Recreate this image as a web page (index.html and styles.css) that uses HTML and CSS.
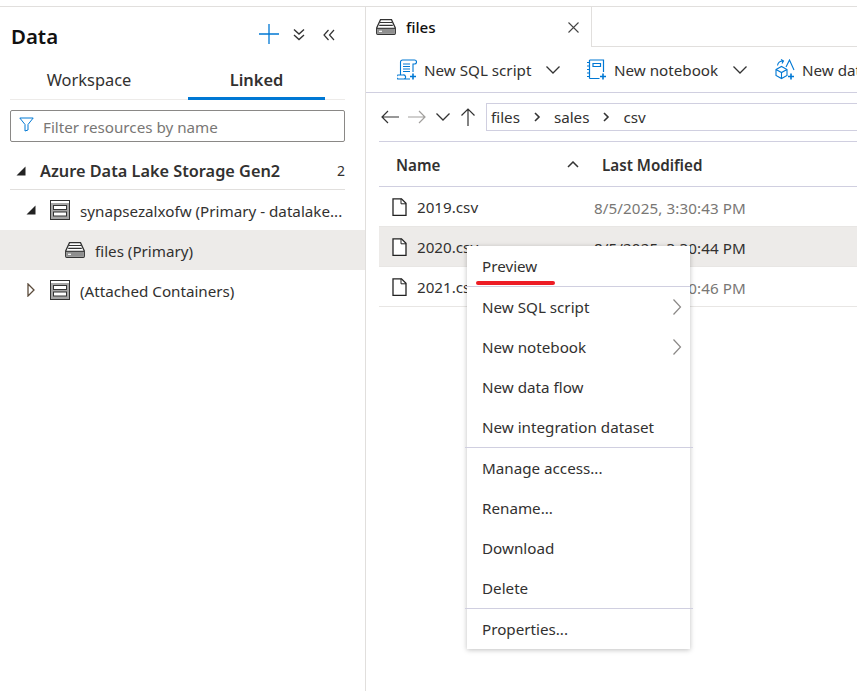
FILE: index.html
```html
<!DOCTYPE html>
<html>
<head>
<meta charset="utf-8"/>
<title>Data - files</title>
<link rel="stylesheet" href="styles.css">
</head>
<body>
<svg class="defs" width="0" height="0">
  <symbol id="drive" viewBox="0 0 20 16">
    <path d="M4.5 .7h11L19.3 9v5.3a1 1 0 0 1-1 1H1.700a1 1 0 0 1-1-1V9z" fill="#fff" stroke="#333" stroke-width="1.300"/>
    <path d="M1 9.300h18M4 3.500h12M3.200 6.300h13.600" fill="none" stroke="#333" stroke-width="1.200"/>
    <path d="M1.200 9.800h17.600v5H1.200z" fill="#8f8f8f"/>
    <path d="M3 12.300h3" stroke="#fff" stroke-width="1.200"/>
  </symbol>
  <symbol id="storage" viewBox="0 0 20 20">
    <rect x=".5" y=".5" width="19" height="19" fill="#a6a6a6" stroke="#333"/>
    <rect x="1" y="1" width="18" height="2" fill="#fff"/>
    <rect x="3.500" y="5.500" width="13" height="4" fill="#fff" stroke="#333"/>
    <rect x="3.500" y="12" width="13" height="4" fill="#fff" stroke="#333"/>
  </symbol>
  <symbol id="file" viewBox="0 0 15 18">
    <path d="M1 .8h8.500L14 5.300v12H1z" fill="#fff" stroke="#222" stroke-width="1.300"/>
    <path d="M9 .8v5h5" fill="none" stroke="#222"/>
  </symbol>
  <symbol id="chevron" viewBox="0 0 16 10">
    <path d="M1.500 1.500L8 8l6.500-6.500" fill="none" stroke="#333" stroke-width="1.300"/>
  </symbol>
  <symbol id="crumb" viewBox="0 0 8 12">
    <path d="M2 2l4 4-4 4" fill="none" stroke="#333" stroke-width="1.600"/>
  </symbol>
  <symbol id="submenu" viewBox="0 0 10 18">
    <path d="M1.500 1.500L8.500 9l-7 7.500" fill="none" stroke="#8a8886" stroke-width="1.200"/>
  </symbol>
</svg>

<div class="app">
  <aside class="side">
    <div class="side-head">
      <h1>Data</h1>
      <svg class="ico-plus" width="20" height="20" viewBox="0 0 20 20"><path d="M0 10h20M10 0v20" stroke="#0078d4" stroke-width="1.300"/></svg>
      <svg class="ico-down" width="12" height="13" viewBox="0 0 12 13"><path d="M1 1.500l5 4.500 5-4.500M1 7l5 4.500L11 7" fill="none" stroke="#333" stroke-width="1.400"/></svg>
      <svg class="ico-left" width="12" height="12" viewBox="0 0 12 12"><path d="M5.500 1L1 6l4.500 5M11 1L6.500 6l4.500 5" fill="none" stroke="#333" stroke-width="1.200"/></svg>
    </div>
    <div class="tabs">
      <div class="tab-item">Workspace</div>
      <div class="tab-item active">Linked</div>
    </div>
    <div class="filter">
      <svg width="15" height="15" viewBox="0 0 15 15"><path d="M.8 1h13.400L9 7.500v5.500l-3 1V7.500z" fill="none" stroke="#0078d4"/></svg>
      <span>Filter resources by name</span>
    </div>
    <div class="group">
      <svg width="10" height="10" viewBox="0 0 10 10"><path d="M9.500 .5v9H.5z" fill="#222"/></svg>
      <span class="group-name">Azure Data Lake Storage Gen2</span>
      <span class="group-count">2</span>
    </div>
    <div class="tree-row lvl1">
      <svg class="twist" width="10" height="10" viewBox="0 0 10 10"><path d="M9.500 .5v9H.5z" fill="#222"/></svg>
      <svg class="node" width="20" height="20"><use href="#storage"/></svg>
      <span>synapsezalxofw (Primary - datalake...</span>
    </div>
    <div class="tree-row lvl2 selected">
      <svg class="node" width="20" height="16"><use href="#drive"/></svg>
      <span>files (Primary)</span>
    </div>
    <div class="tree-row lvl1">
      <svg class="twist" width="10" height="14" viewBox="0 0 10 14"><path d="M2 1l6 6-6 6z" fill="#fff" stroke="#5a4a3a" stroke-width="1.300"/></svg>
      <svg class="node" width="20" height="20"><use href="#storage"/></svg>
      <span>(Attached Containers)</span>
    </div>
  </aside>

  <main class="main">
    <div class="tabbar">
      <div class="doc-tab">
        <svg width="20" height="16"><use href="#drive"/></svg>
        <span class="doc-name">files</span>
        <svg class="doc-close" width="11" height="11" viewBox="0 0 11 11"><path d="M.5 .5l10 10M10.500 .5l-10 10" stroke="#444" stroke-width="1.100"/></svg>
      </div>
    </div>

    <div class="toolbar">
      <div class="tool tool-sql">
        <svg width="20" height="21" viewBox="0 0 20 21" fill="none" stroke="#0078d4" stroke-width="1.100">
          <path d="M3.500 16V3a2 2 0 0 1 2-2h12a2 2 0 0 1 0 4h-1.500V13M3.500 16H1.500a2 2 0 0 0 0 4H13M6 16H3.500M6 16a2 2 0 0 1 1 4"/>
          <path d="M6 5h7M6 7.500h7M6 10h7M6 12.500h7"/>
          <path d="M16 14.500v6M13 17.500h6" stroke-width="1.600"/>
        </svg>
        <span>New SQL script</span>
        <svg class="caret" width="16" height="10"><use href="#chevron"/></svg>
      </div>
      <div class="tool tool-nb">
        <svg width="20" height="21" viewBox="0 0 20 21" fill="none" stroke="#0078d4" stroke-width="1.200">
          <path d="M2.500 1h14v12M2.500 19.500h10M2.500 1v18.500"/>
          <path d="M6 4.500h7.500v3H6z"/>
          <path d="M0 3.500h3M0 7h3M0 10.500h3M0 14h3M0 17.500h3"/>
          <path d="M16 14.500v6M13 17.500h6" stroke-width="1.600"/>
        </svg>
        <span>New notebook</span>
        <svg class="caret" width="16" height="10"><use href="#chevron"/></svg>
      </div>
      <div class="tool tool-flow">
        <svg width="20" height="21" viewBox="0 0 20 21" fill="none" stroke="#0078d4" stroke-width="1.100">
          <path d="M1 10.500l5.500-3 5.500 3v6l-5.500 3-5.500-3zM1 10.500l5.500 3 5.500-3M6.500 13.500v6"/>
          <path d="M2.500 6.500C3 3.500 5 2 8 2M6 .5L8.500 2 7 4.500"/>
          <path d="M11 8L14.500 1 19 11"/>
          <path d="M16 14.500v6M13 17.500h6" stroke-width="1.600"/>
        </svg>
        <span>New data flow</span>
      </div>
    </div>

    <div class="pathbar">
      <div class="nav">
        <svg width="18" height="14" viewBox="0 0 18 14"><path d="M18 7H1M7 1L1 7l6 6" fill="none" stroke="#333" stroke-width="1.200"/></svg>
        <svg width="18" height="14" viewBox="0 0 18 14"><path d="M0 7h17M11 1l6 6-6 6" fill="none" stroke="#a19f9d" stroke-width="1.200"/></svg>
        <svg width="16" height="10"><use href="#chevron"/></svg>
        <svg width="16" height="18" viewBox="0 0 16 18"><path d="M8 18V1M1.500 7.500L8 1l6.500 6.500" fill="none" stroke="#333" stroke-width="1.200"/></svg>
      </div>
      <div class="crumbs">
        <span class="crumb-files">files</span>
        <svg width="8" height="12"><use href="#crumb"/></svg>
        <span>sales</span>
        <svg width="8" height="12"><use href="#crumb"/></svg>
        <span>csv</span>
      </div>
    </div>

    <div class="table">
      <div class="thead">
        <div class="col-name"><span>Name</span>
          <svg width="12" height="7" viewBox="0 0 12 7"><path d="M1 6l5-5 5 5" fill="none" stroke="#333" stroke-width="1.500"/></svg>
        </div>
        <div class="col-date">Last Modified</div>
      </div>
      <div class="trow">
        <div class="cell-name"><svg width="15" height="18"><use href="#file"/></svg>2019.csv</div>
        <div class="cell-date">8/5/2025, 3:30:43 PM</div>
      </div>
      <div class="trow hover">
        <div class="cell-name"><svg width="15" height="18"><use href="#file"/></svg>2020.csv</div>
        <div class="cell-date">8/5/2025, 3:30:44 PM</div>
      </div>
      <div class="trow">
        <div class="cell-name"><svg width="15" height="18"><use href="#file"/></svg>2021.csv</div>
        <div class="cell-date">8/5/2025, 3:30:46 PM</div>
      </div>
    </div>
  </main>

  <div class="menu">
    <div class="menu-item">Preview<div class="red-mark"></div></div>
    <div class="menu-sep first"></div>
    <div class="menu-item">New SQL script<svg width="10" height="18"><use href="#submenu"/></svg></div>
    <div class="menu-item">New notebook<svg width="10" height="18"><use href="#submenu"/></svg></div>
    <div class="menu-item">New data flow</div>
    <div class="menu-item">New integration dataset</div>
    <div class="menu-sep"></div>
    <div class="menu-item">Manage access...</div>
    <div class="menu-item">Rename...</div>
    <div class="menu-item">Download</div>
    <div class="menu-item">Delete</div>
    <div class="menu-sep"></div>
    <div class="menu-item">Properties...</div>
  </div>
</div>
</body>
</html>
```

FILE: styles.css
```css
body {
  margin: 0;
  background: #fff;
  color: #323130;
  font-family: "Noto Sans", "Open Sans", sans-serif;
  font-size: 15.2px;
}

svg {
  display: block;
  flex: none;
}

.defs {
  position: absolute;
}

.app {
  position: relative;
  display: flex;
  width: 857px;
  height: 691px;
  overflow: hidden;
}

/* left panel */
.side {
  box-sizing: border-box;
  width: 366px;
  margin-top: 6px;
  border-top: 1px solid #e1dfdd;
  border-right: 1px solid #e1dfdd;
}

.side-head {
  display: flex;
  align-items: center;
  height: 43px;
  padding: 14px 0 0 11px;
  box-sizing: border-box;
}

.side-head h1 {
  margin: 0;
  flex: 1;
  font-size: 20.4px;
  font-weight: 600;
  color: #111;
}

.ico-plus {
  margin-right: 14px;
  margin-top: -4px;
}

.ico-down {
  margin-right: 18px;
  margin-top: -2px;
}

.ico-left {
  margin-right: 30px;
  margin-top: -2px;
}

.tabs {
  display: flex;
  height: 50px;
  margin: 0 20px 0 10px;
  box-sizing: border-box;
  border-bottom: 1px solid #edebe9;
}

.tab-item {
  width: 158px;
  margin-right: 20px;
  padding-top: 17px;
  text-align: center;
  font-size: 16.400px;
  line-height: 26px;
}

.tab-item.active {
  width: 137px;
  margin: 0 0 -1px 0;
  font-weight: 600;
  border-bottom: 3px solid #0078d4;
}

.filter {
  display: flex;
  align-items: center;
  gap: 9px;
  box-sizing: border-box;
  height: 32px;
  margin: 10px 20px 0 10px;
  padding: 0 8px;
  border: 1px solid #8a8886;
  border-radius: 2px;
  color: #797775;
}

.filter svg {
  margin-top: -4px;
}

.filter span {
  padding-top: 1px;
}

.group {
  display: flex;
  align-items: center;
  height: 48px;
  margin: 0 20px 0 10px;
  padding: 10px 0 0 6px;
  box-sizing: border-box;
  border-bottom: 1px solid #e1dfdd;
  font-size: 16.300px;
  font-weight: 600;
}

.group-name {
  flex: 1;
  margin-left: 14px;
}

.group-count {
  font-size: 14px;
  font-weight: 400;
}

.tree-row {
  display: flex;
  align-items: center;
  height: 40px;
}

.tree-row span {
  padding-top: 2px;
}

.tree-row.lvl1 {
  padding-left: 26px;
}

.tree-row.lvl2 {
  padding-left: 65px;
}

.tree-row .twist {
  width: 10px;
}

.tree-row .node {
  margin-left: 14px;
  margin-right: 10px;
}

.tree-row.lvl2 .node {
  margin-left: 0;
}

.tree-row.selected {
  background: #edebe9;
}

/* right panel */
.main {
  flex: 1;
  min-width: 0;
  margin-top: 6px;
}

.tabbar {
  height: 41px;
  box-sizing: border-box;
  border-top: 1px solid #e1dfdd;
  border-bottom: 1px solid #e1dfdd;
}

.doc-tab {
  display: flex;
  align-items: center;
  box-sizing: border-box;
  width: 226px;
  height: 40px;
  padding: 0 12px 0 10px;
  background: #fff;
  border-right: 1px solid #e1dfdd;
}

.doc-name {
  flex: 1;
  margin-left: 10px;
  font-weight: 500;
  color: #111;
}

.toolbar {
  display: flex;
  align-items: center;
  height: 45px;
  padding-left: 31px;
  border-bottom: 1px solid #d0cfe0;
  white-space: nowrap;
}

.tool {
  display: flex;
  flex: none;
  align-items: center;
}

.tool > svg:first-child {
  margin-right: 7px;
}

.tool span {
  padding-top: 1px;
}

.tool .caret {
  margin-left: 14px;
}

.tool-sql {
  width: 190px;
}

.tool-nb {
  width: 188px;
}

.pathbar {
  display: flex;
  align-items: center;
  height: 48px;
  padding-left: 15px;
}

.nav {
  display: flex;
  align-items: center;
  gap: 9px;
  width: 105px;
}

.crumbs {
  flex: 1;
  display: flex;
  align-items: center;
  gap: 13px;
  height: 26px;
  padding-left: 4px;
  border: 1px solid #d0cfe0;
  border-right: 0;
}

.table {
  margin-left: 13px;
}

.thead {
  display: flex;
  align-items: center;
  height: 46px;
  box-sizing: border-box;
  padding-left: 17px;
  border-top: 1px solid #d0cfe0;
  border-bottom: 1px solid #d0cfe0;
  font-weight: 600;
}

.col-name {
  display: flex;
  align-items: center;
  justify-content: space-between;
  width: 183px;
  margin-right: 23px;
}

.col-name span,
.col-date {
  padding-top: 2px;
}

.trow {
  display: flex;
  align-items: center;
  height: 40px;
  box-sizing: border-box;
  padding-top: 1px;
  border-bottom: 1px solid #e8e6e4;
}

.trow.hover {
  background: #edebe9;
}

.cell-name {
  display: flex;
  align-items: center;
  gap: 10px;
  width: 215px;
  padding-left: 13px;
  box-sizing: border-box;
}

.cell-date {
  padding-top: 2px;
  letter-spacing: 0.1px;
  color: #797775;
}

.trow.hover .cell-date {
  color: #323130;
}

/* context menu */
.menu {
  position: absolute;
  left: 467px;
  top: 246px;
  width: 223px;
  background: #fff;
  box-shadow: 0 1px 5px rgba(0, 0, 0, 0.25);
}

.menu-item {
  position: relative;
  display: flex;
  align-items: center;
  justify-content: space-between;
  height: 40px;
  padding: 0 8px 0 15px;
}

.menu-sep {
  height: 1px;
  margin: 0 -3px 0 -2px;
  background: #d0cfe0;
}

.menu-sep.first {
  margin-right: 0;
}

.red-mark {
  position: absolute;
  left: 9px;
  top: 35px;
  width: 79px;
  height: 4px;
  border-radius: 2px;
  background: #ed1c24;
}
```
